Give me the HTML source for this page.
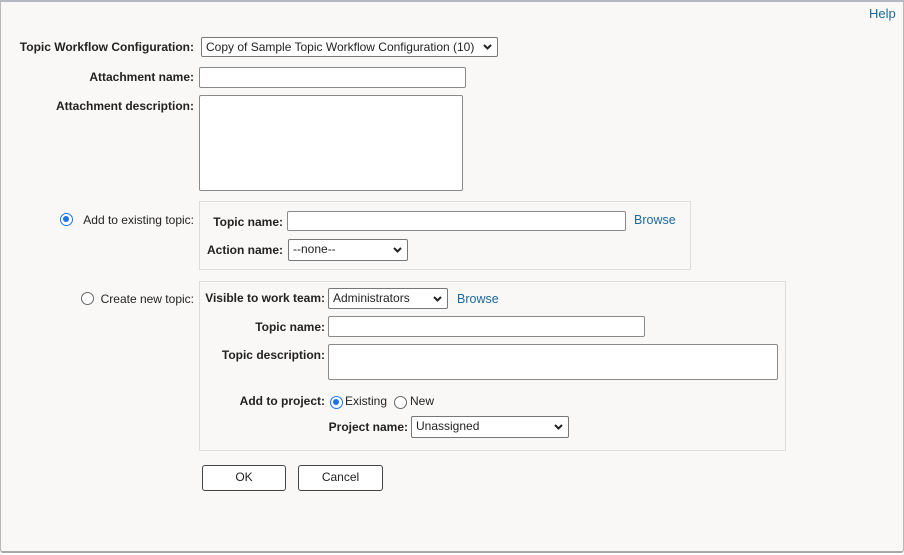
<!DOCTYPE html>
<html><head><style>
*{box-sizing:border-box;margin:0;padding:0}
body{width:904px;height:555px;background:#fff;font-family:"Liberation Sans",sans-serif;font-size:12px;color:#222;position:relative;overflow:hidden}
#frame{position:absolute;left:0;top:0;width:904px;height:553px;background:#f9f8f6;border:1px solid #b8b8b8;border-top:2px solid #b4b8c4;border-bottom:2px solid #a8a8a8;border-radius:0 0 3px 3px}
.l{position:absolute;font-weight:bold;text-align:right;white-space:nowrap;line-height:14px}
.t{position:absolute;white-space:nowrap;line-height:14px}
.in{position:absolute;background:#fff;border:1px solid #8a8a8a;border-radius:2px}
.sel{position:absolute;background:#fff;border:1px solid #777;border-radius:2px;padding-left:4px;line-height:18px;font-size:12px;white-space:nowrap}
.sel svg{position:absolute;right:5px;top:50%;margin-top:-3px}
.box{position:absolute;border:1px solid #ddd;background:#f9f8f6}
a{color:#1b6a9c;text-decoration:none}
.btn{position:absolute;background:#fff;border:1px solid #444;border-radius:3px;text-align:center;line-height:23px;font-size:12px}
.rad{position:absolute;width:13px;height:13px;border-radius:50%;border:1px solid #666;background:#fff}
.rad.on{border:1.5px solid #1a73e8}
.rad.on::after{content:"";position:absolute;left:2px;top:2px;width:6px;height:6px;border-radius:50%;background:#1a73e8}
</style></head><body>
<div id="frame"></div>
<a class="t" style="left:869px;top:7px;font-size:13px">Help</a>

<div class="l" style="right:710px;top:40px">Topic Workflow Configuration:</div>
<div class="sel" style="left:201px;top:37px;width:297px;height:20px">Copy of Sample Topic Workflow Configuration (10)<svg width="9" height="6" viewBox="0 0 9 6"><path d="M1 1l3.5 3.5L8 1" stroke="#222" stroke-width="2" fill="none"/></svg></div>

<div class="l" style="right:710px;top:70px">Attachment name:</div>
<div class="in" style="left:199px;top:67px;width:267px;height:21px"></div>

<div class="l" style="right:710px;top:99px">Attachment description:</div>
<div class="in" style="left:199px;top:95px;width:264px;height:96px"></div>

<div class="rad on" style="left:60px;top:213px"></div>
<div class="t" style="right:710px;top:213px">Add to existing topic:</div>
<div class="box" style="left:199px;top:201px;width:492px;height:69px"></div>
<div class="l" style="right:621px;top:215px">Topic name:</div>
<div class="in" style="left:287px;top:211px;width:339px;height:20px"></div>
<a class="t" style="left:634px;top:213px;font-size:12.5px">Browse</a>
<div class="l" style="right:621px;top:243px">Action name:</div>
<div class="sel" style="left:288px;top:239px;width:120px;height:22px">--none--<svg width="9" height="6" viewBox="0 0 9 6"><path d="M1 1l3.5 3.5L8 1" stroke="#222" stroke-width="2" fill="none"/></svg></div>

<div class="rad" style="left:81px;top:292px"></div>
<div class="t" style="right:710px;top:292px">Create new topic:</div>
<div class="box" style="left:199px;top:281px;width:587px;height:170px"></div>
<div class="l" style="right:579px;top:291px">Visible to work team:</div>
<div class="sel" style="left:328px;top:288px;width:120px;height:21px">Administrators<svg width="9" height="6" viewBox="0 0 9 6"><path d="M1 1l3.5 3.5L8 1" stroke="#222" stroke-width="2" fill="none"/></svg></div>
<a class="t" style="left:457px;top:292px;font-size:12.5px">Browse</a>
<div class="l" style="right:579px;top:320px">Topic name:</div>
<div class="in" style="left:328px;top:316px;width:317px;height:21px"></div>
<div class="l" style="right:579px;top:348px">Topic description:</div>
<div class="in" style="left:328px;top:344px;width:450px;height:36px"></div>
<div class="l" style="right:579px;top:394px">Add to project:</div>
<div class="rad on" style="left:330px;top:396px"></div>
<div class="t" style="left:345px;top:394px">Existing</div>
<div class="rad" style="left:394px;top:396px"></div>
<div class="t" style="left:410px;top:394px">New</div>
<div class="l" style="right:496px;top:420px">Project name:</div>
<div class="sel" style="left:411px;top:416px;width:158px;height:22px">Unassigned<svg width="9" height="6" viewBox="0 0 9 6"><path d="M1 1l3.5 3.5L8 1" stroke="#222" stroke-width="2" fill="none"/></svg></div>

<div class="btn" style="left:202px;top:465px;width:84px;height:26px">OK</div>
<div class="btn" style="left:298px;top:465px;width:85px;height:26px">Cancel</div>
</body></html>
